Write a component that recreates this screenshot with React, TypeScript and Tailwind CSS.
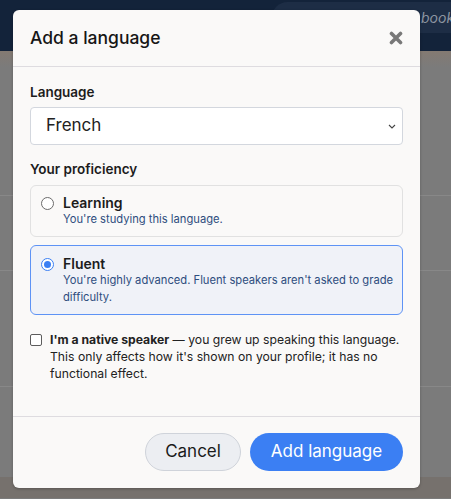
import React from 'react';

const font = { fontFamily: 'Inter, "Noto Sans", sans-serif' };

function CloseIcon() {
  return (
    <svg width="14" height="14" viewBox="0 0 14 14" className="text-[#787878]">
      <path d="M2.5 2.5 L11.5 11.5 M11.5 2.5 L2.5 11.5" stroke="currentColor" strokeWidth="3.6" strokeLinecap="round" />
    </svg>
  );
}

function Chevron() {
  return (
    <svg width="8" height="5" viewBox="0 0 8 5" className="text-[#444]">
      <path d="M1 1 L4 4 L7 1" fill="none" stroke="currentColor" strokeWidth="1.1" />
    </svg>
  );
}

function Radio({ checked }: { checked: boolean }) {
  return (
    <span
      className={
        checked
          ? 'mt-[3px] flex h-[13px] w-[13px] shrink-0 items-center justify-center rounded-full border border-[#3b7ff3] bg-white'
          : 'mt-[3px] flex h-[13px] w-[13px] shrink-0 items-center justify-center rounded-full border border-[#6b6b6b] bg-white'
      }
    >
      {checked && <span className="h-[7px] w-[7px] rounded-full bg-[#3b7ff3]" />}
    </span>
  );
}

function Option({ title, desc, checked }: { title: string; desc: string; checked: boolean }) {
  return (
    <div
      className={
        checked
          ? 'flex gap-[9px] rounded-[6px] border-[1.5px] border-[#5e93f5] bg-[#f0f2f8] pl-[10px] pr-[4px] pt-[9px] pb-[8px]'
          : 'flex gap-[9px] rounded-[6px] border border-[#e1e1e1] bg-[#faf9f8] pl-[10px] pr-[4px] pt-[8px] pb-[8px]'
      }
    >
      <Radio checked={checked} />
      <div>
        <div className="text-[14px] font-semibold leading-[17px] text-[#1c1c1c]">{title}</div>
        <div className="text-[11.2px] leading-[17px] text-[#2e4d7e]">{desc}</div>
      </div>
    </div>
  );
}

export default function App() {
  return (
    <div className="relative h-[499px] w-[451px] overflow-hidden bg-[#7b7b7b]" style={font}>
      {/* dimmed page behind */}
      <div className="flex h-[51px] items-start bg-[#13233a]">
        <div className="ml-[272px] mt-[2px] flex h-[31px] flex-1 items-center overflow-hidden rounded-l-[16px] bg-[#1d2d45] pl-[149px]">
          <span className="whitespace-nowrap text-[14px] italic text-[#8d95a1]">book</span>
        </div>
      </div>
      <div className="h-[16px] bg-gradient-to-b from-[#847a72] to-[#7b7b7b]" />
      <div className="h-[129px] border-b border-[#888888]" />
      <div className="h-[75px] border-b border-[#888888]" />
      <div className="h-[116px] border-b border-[#888888]" />
      <div className="h-[90px]" />
      <div className="h-[21px] bg-[#76716d]" />

      {/* modal */}
      <div className="absolute left-[13px] top-[10px] flex h-[478px] w-[407px] flex-col rounded-[6px] bg-[#faf9f8] shadow-[0_1px_3px_rgba(0,0,0,0.25)]">
        <div className="flex h-[57px] items-center justify-between border-b border-[#dedce0] pl-[17px] pr-[17px]">
          <h2 className="text-[17.5px] font-medium text-[#161616]">Add a language</h2>
          <CloseIcon />
        </div>

        <div className="flex-1 border-b border-[#dedce0] px-[17px] pt-[16px]">
          <div className="text-[13.5px] font-semibold leading-[18px] text-[#1c1c1c]">Language</div>
          <div className="mt-[6px] flex h-[38px] items-center justify-between rounded-[4px] border border-[#d3d7de] bg-white pl-[15px] pr-[6px]">
            <span className="text-[17px] text-[#222]">French</span>
            <Chevron />
          </div>

          <div className="mt-[15px] text-[13.5px] font-semibold leading-[18px] text-[#1c1c1c]">Your proficiency</div>
          <div className="mt-[7px] flex flex-col gap-[8px]">
            <Option checked={false} title="Learning" desc="You're studying this language." />
            <Option
              checked={true}
              title="Fluent"
              desc="You're highly advanced. Fluent speakers aren't asked to grade difficulty."
            />
          </div>

          <div className="mt-[16px] flex gap-[8px]">
            <span className="mt-[3px] h-[12px] w-[12px] shrink-0 rounded-[2px] border border-[#5c5c5c] bg-white" />
            <p className="text-[12.2px] leading-[17px] text-[#222]">
              <strong className="font-bold">I'm a native speaker</strong> — you grew up speaking this language. This only
              affects how it's shown on your profile; it has no functional effect.
            </p>
          </div>
        </div>

        <div className="flex justify-end gap-[9px] px-[17px] pt-[16px] pb-[17px]">
          <button className="h-[38px] w-[96px] rounded-full border border-[#cfd3da] bg-[#eceef2] text-[17px] text-[#1a1a1a]">
            Cancel
          </button>
          <button className="h-[38px] w-[153px] rounded-full bg-[#3b7ff3] text-[17px] text-white">Add language</button>
        </div>
      </div>
    </div>
  );
}
